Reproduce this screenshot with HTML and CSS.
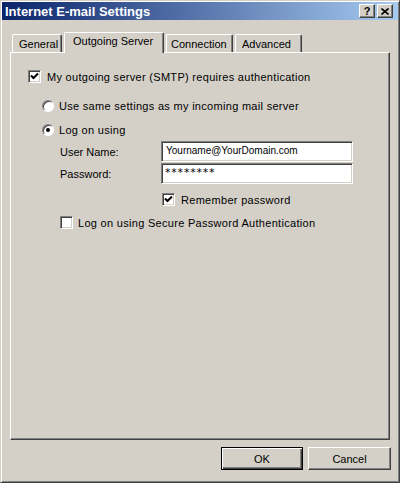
FILE: index.html
```html
<!DOCTYPE html>
<html lang="en">
<head>
  <meta charset="UTF-8">
  <title>Internet E-mail Settings</title>
  <link rel="stylesheet" href="styles.css">
</head>
<body>
  <div class="window">
    <div class="titlebar">
      <span class="title">Internet E-mail Settings</span>
      <div class="title-buttons">
        <span class="tbtn">?</span>
        <span class="tbtn tbtn-close">
          <svg width="8" height="7" viewBox="0 0 8 7"><path d="M0.5 0.5 L7.5 6.5 M7.5 0.5 L0.5 6.5" stroke="#000" stroke-width="1.6"/></svg>
        </span>
      </div>
    </div>

    <div class="tabs">
      <div class="tab tab-general">General</div>
      <div class="tab tab-active">Outgoing Server</div>
      <div class="tab tab-conn">Connection</div>
      <div class="tab tab-adv">Advanced</div>
    </div>

    <div class="panel">
      <label class="row row-auth">
        <span class="check checked"><svg width="9" height="9" viewBox="0 0 9 9"><path d="M1 3.5 L3.5 6 L8 1.5" fill="none" stroke="#000" stroke-width="2"/></svg></span>
        <span class="label">My outgoing server (SMTP) requires authentication</span>
      </label>

      <label class="row row-same">
        <span class="radio"></span>
        <span class="label">Use same settings as my incoming mail server</span>
      </label>

      <label class="row row-logon">
        <span class="radio selected"><span class="dot"></span></span>
        <span class="label">Log on using</span>
      </label>

      <div class="field field-user">
        <span class="field-label">User Name:</span>
        <div class="input">Yourname@YourDomain.com</div>
      </div>
      <div class="field field-pass">
        <span class="field-label">Password:</span>
        <div class="input input-pass">********</div>
      </div>

      <label class="row row-remember">
        <span class="check checked"><svg width="9" height="9" viewBox="0 0 9 9"><path d="M1 3.5 L3.5 6 L8 1.5" fill="none" stroke="#000" stroke-width="2"/></svg></span>
        <span class="label">Remember password</span>
      </label>

      <label class="row row-spa">
        <span class="check"></span>
        <span class="label">Log on using Secure Password Authentication</span>
      </label>
    </div>

    <div class="footer">
      <button class="btn btn-default">OK</button>
      <button class="btn">Cancel</button>
    </div>
  </div>
</body>
</html>
```

FILE: styles.css
```css
body {
  margin: 0;
  font-family: "Liberation Sans", Arial, sans-serif;
  font-size: 11px;
  color: #000;
  background: #d4d0c8;
}
.window {
  width: 400px;
  height: 483px;
  box-sizing: border-box;
  background: #d4d0c8;
  border: 1px solid;
  border-color: #d4d0c8 #404040 #404040 #d4d0c8;
  box-shadow: inset 1px 1px #fff, inset -1px -1px #808080;
  padding: 1px;
  display: flex;
  flex-direction: column;
}
.titlebar {
  height: 18px;
  background: linear-gradient(to right, #0a246a, #a6caf0);
  display: flex;
  align-items: center;
  justify-content: space-between;
  padding: 0 5px 0 3px;
}
.title {
  color: #fff;
  font-weight: bold;
  font-size: 13px;
}
.title-buttons {
  display: flex;
  gap: 2px;
}
.tbtn {
  width: 16px;
  height: 14px;
  box-sizing: border-box;
  background: #d4d0c8;
  border: 1px solid;
  border-color: #fff #404040 #404040 #fff;
  box-shadow: inset -1px -1px #808080;
  display: flex;
  align-items: center;
  justify-content: center;
  font-weight: bold;
  font-size: 11px;
  line-height: 1;
}
.tabs {
  height: 32px;
  display: flex;
  align-items: flex-end;
  padding-left: 10px;
  gap: 2px;
}
.tab {
  height: 18px;
  box-sizing: border-box;
  border: 1px solid;
  border-bottom: none;
  border-color: #fff #404040 transparent #fff;
  box-shadow: inset -1px 0 #808080;
  border-radius: 2px 2px 0 0;
  padding: 3px 0 0 6px;
}
.tab-general { width: 50px; }
.tab-active {
  width: 100px;
  height: 21px;
  margin-bottom: -1px;
  background: #d4d0c8;
  position: relative;
  z-index: 1;
  padding: 2px 0 0 8px;
}
.tab-conn { width: 67px; padding-left: 4px; }
.tab-adv { width: 67px; padding-left: 6px; }
.panel {
  margin-left: 8px;
  width: 380px;
  height: 388px;
  box-sizing: border-box;
  border: 1px solid;
  border-color: #fff #404040 #404040 #fff;
  box-shadow: inset -1px -1px #808080;
  padding-top: 17px;
}
.row {
  display: flex;
  align-items: center;
  height: 13px;
  gap: 5px;
}
.label {
  letter-spacing: 0.3px;
}
.row-auth { margin-left: 17px; gap: 6px; }
.row-same { margin-left: 31px; margin-top: 16px; }
.row-logon { margin-left: 31px; margin-top: 11px; }
.row-remember { margin-left: 151px; margin-top: 9px; gap: 6px; }
.row-spa { margin-left: 49px; margin-top: 10px; }
.check {
  width: 13px;
  height: 13px;
  box-sizing: border-box;
  background: #fff;
  border: 1px solid;
  border-color: #808080 #fff #fff #808080;
  box-shadow: inset 1px 1px #404040, inset -1px -1px #d4d0c8;
  display: flex;
  align-items: center;
  justify-content: center;
  flex-shrink: 0;
}
.radio {
  width: 12px;
  height: 12px;
  box-sizing: border-box;
  border-radius: 50%;
  background: #fff;
  border: 1px solid;
  border-color: #808080 #fff #fff #808080;
  box-shadow: inset 1px 1px #404040;
  display: flex;
  align-items: center;
  justify-content: center;
  flex-shrink: 0;
}
.dot {
  width: 4px;
  height: 4px;
  border-radius: 50%;
  background: #000;
}
.field {
  display: flex;
  align-items: center;
  margin-left: 49px;
  height: 21px;
}
.field-user { margin-top: 5px; }
.field-pass { margin-top: 1px; }
.field-label {
  width: 101px;
}
.input {
  width: 192px;
  height: 21px;
  box-sizing: border-box;
  background: #fff;
  border: 1px solid;
  border-color: #808080 #fff #fff #808080;
  box-shadow: inset 1px 1px #404040, inset -1px -1px #d4d0c8;
  padding: 3px 0 0 4px;
  font-size: 10px;
  white-space: nowrap;
}
.input-pass {
  font-family: "DejaVu Sans", sans-serif;
  font-size: 11px;
  padding: 2px 0 0 3px;
  letter-spacing: 0.8px;
}
.footer {
  display: flex;
  justify-content: flex-end;
  gap: 5px;
  padding: 7px 7px 0 0;
}
.btn {
  width: 83px;
  height: 23px;
  box-sizing: border-box;
  background: #d4d0c8;
  font-family: "Liberation Sans", Arial, sans-serif;
  font-size: 11px;
  color: #000;
  border: 1px solid;
  border-color: #fff #404040 #404040 #fff;
  box-shadow: inset -1px -1px #808080;
  padding: 0;
}
.btn-default {
  width: 82px;
  border-color: #000;
  box-shadow: inset 1px 1px #fff, inset -1px -1px #404040, inset -2px -2px #808080;
}
```
